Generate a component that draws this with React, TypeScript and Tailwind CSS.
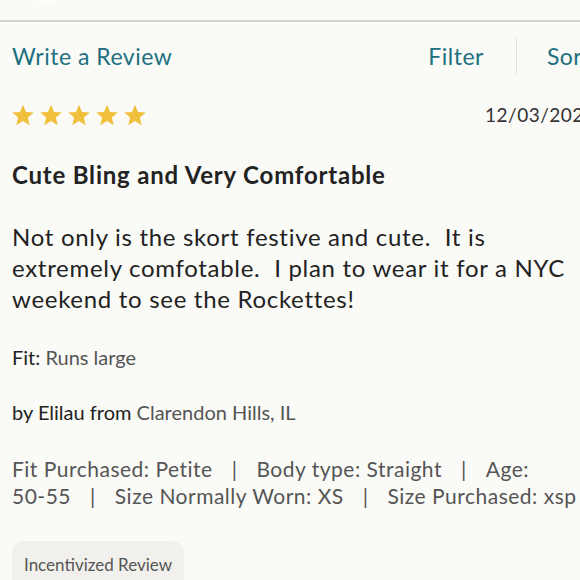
import React from 'react';

const Star = () => (
    <svg viewBox="0 0 24 24" className="w-[24px] h-[24px]" fill="#f0c03c">
        <path d="M12 1.8l3.05 7.1 7.7.65-5.85 5.05 1.75 7.55L12 18.1l-6.65 4.05 1.75-7.55L1.25 9.55l7.7-.65z" />
    </svg>
);

const Sep = () => <span className="mx-[19px]">|</span>;

const App: React.FC = () => {
    return (
        <div className="w-[580px] h-[580px] overflow-hidden bg-[#fafaf7] relative" style={{ fontFamily: 'Lato, "Open Sans", sans-serif' }}>
            <div className="absolute left-[28px] top-[-40px] w-[34px] h-[43px] rounded-full bg-white" />
            <div className="w-[640px]">
                <div className="h-[20px]" />
                <div className="h-[2px] bg-[#d4d4d2]" />
                <div className="flex items-center h-[68px] px-[12px] text-[23px] text-[#20707f] tracking-[0.5px]">
                    <span>Write a Review</span>
                    <span className="ml-auto">Filter</span>
                    <div className="w-[1px] h-[36px] bg-[#e2e2de] ml-[32px] mr-[30px]" />
                    <span className="mr-[37px]">Sort</span>
                </div>
                <div className="px-[12px]">
                    <div className="flex items-center pt-[12px] h-[38px]">
                        <div className="flex gap-[4px] -ml-[1px]">
                            <Star /><Star /><Star /><Star /><Star />
                        </div>
                        <span className="ml-[338px] text-[19px] text-[#333] tracking-[0.5px]">12/03/2023</span>
                    </div>
                    <h2 className="mt-[32px] text-[24px] leading-[30px] font-bold text-[#222] tracking-[0.8px]">Cute Bling and Very Comfortable</h2>
                    <p className="mt-[31px] text-[24px] leading-[31px] text-[#222] whitespace-pre tracking-[0.7px]">
                        {'Not only is the skort festive and cute.  It is'}<br />
                        {'extremely comfotable.  I plan to wear it for a NYC'}<br />
                        {'weekend to see the Rockettes!'}
                    </p>
                    <p className="mt-[31px] text-[20px] leading-[24px] text-[#222]">Fit: <span className="text-[#555]">Runs large</span></p>
                    <p className="mt-[31px] text-[20px] leading-[24px] text-[#222]">by Elilau from <span className="text-[#555]">Clarendon Hills, IL</span></p>
                    <p className="mt-[31px] text-[21px] leading-[27px] text-[#555] tracking-[0.5px]">
                        Fit Purchased: Petite<Sep />Body type: Straight<Sep />Age:<br />
                        50-55<Sep />Size Normally Worn: XS<Sep />Size Purchased: xsp
                    </p>
                    <div className="mt-[32px] inline-block bg-[#f1f0ec] rounded-t-[12px] px-[12px] pt-[13px] pb-[14px] text-[17px] leading-[22px] text-[#555]">
                        Incentivized Review
                    </div>
                </div>
            </div>
        </div>
    );
};

export default App;
